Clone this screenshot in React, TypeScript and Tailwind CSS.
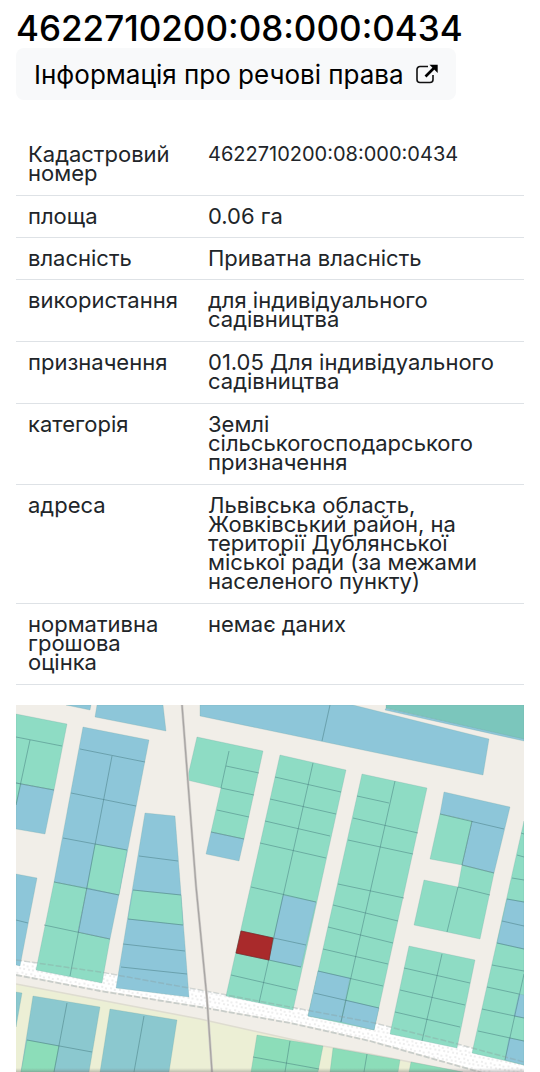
type Row = { label: string; value: string; wraps: boolean; numeric?: boolean };

const cadastralNumber = '4622710200:08:000:0434';

const rows: Row[] = [
  { label: 'Кадастровий номер', value: cadastralNumber, wraps: true, numeric: true },
  { label: 'площа', value: '0.06 га', wraps: false },
  { label: 'власність', value: 'Приватна власність', wraps: false },
  { label: 'використання', value: 'для індивідуального садівництва', wraps: true },
  { label: 'призначення', value: '01.05 Для індивідуального садівництва', wraps: true },
  { label: 'категорія', value: 'Землі сільськогосподарського призначення', wraps: true },
  {
    label: 'адреса',
    value: 'Львівська область, Жовківський район, на території Дублянської міської ради (за межами населеного пункту)',
    wraps: true,
  },
  { label: 'нормативна грошова оцінка', value: 'немає даних', wraps: true },
];

const GREEN = '#8edcc4';
const BLUE = '#8dc6d9';
const TEAL = '#7bc6bc';
const TEAL_BLUE = '#8bc8cf';
const MEADOW = '#8cddb9';

// Filled plots: [colour, polygon points]
const plots: [string, string][] = [
  [BLUE, '66,705 91,705 90,710'],
  [BLUE, '97,705 163,705 166,731 95,717'],
  [GREEN, '16,714 67,724 54,790 16,783'],
  [BLUE, '16,783 54,790 45,834 16,829'],
  [GREEN, '16,783 21,784 16,805'],
  [BLUE, '16,874 37,878 20,966 16,965'],
  [BLUE, '83,727 149,740 119,895 54,882'],
  [GREEN, '95,844 127,850 119,895 87,888'],
  [GREEN, '54,882 87,888 78,932 110,939 102,983 36,970'],
  [BLUE, '87,888 119,895 110,939 78,932'],
  [BLUE, '145,813 175,816 189,997 116,988'],
  [GREEN, '133,890 181,895 183,925 128,919'],
  [BLUE, '200,705 353,705 489,739 483,775 200,716'],
  [BLUE, '386,708 524,738 524,741 385,710'],
  [TEAL, '386,705 524,705 524,739 386,708'],
  [GREEN, '197,737 263,751 244,839 211,832 221,788 187,780'],
  [BLUE, '211,832 244,839 239,861 206,854'],
  [GREEN, '280,755 346,770 293,1010 226,996'],
  [BLUE, '283,895 316,902 301,967 269,960'],
  [GREEN, '362,774 427,788 374,1030 308,1016'],
  [BLUE, '318,971 350,978 341,1022 308,1016'],
  [BLUE, '346,1000 379,1008 374,1030 341,1022'],
  [BLUE, '444,792 510,807 494,873 462,865 472,821 440,814'],
  [GREEN, '440,814 472,821 462,865 430,859'],
  [GREEN, '462,865 494,873 480,939 414,925 424,880 458,887'],
  [GREEN, '409,946 475,960 457,1048 390,1034'],
  [GREEN, '524,821 524,1065 472,1053'],
  [BLUE, '507,899 524,902 524,949 497,943'],
  [BLUE, '519,994 524,995 524,1018 514,1016'],
  [BLUE, '509,1038 524,1041 524,1065 505,1060'],
  [TEAL_BLUE, '16,992 22,993 16,1027'],
  [TEAL_BLUE, '33,996 100,1007 89,1072 21,1072'],
  [MEADOW, '27,1040 59,1046 54,1072 21,1072'],
  [TEAL_BLUE, '110,1009 177,1020 169,1072 100,1072'],
  [MEADOW, '257,1035 323,1046 318,1072 251,1072'],
  [MEADOW, '333,1048 400,1060 398,1072 330,1072'],
  [MEADOW, '411,1062 463,1072 409,1072'],
];

// Boundaries between neighbouring plots
const boundaries =
  'M16 737L62 746M30 740L16 805M16 783L54 790M16 920L28 923' +
  'M112 756L70 976M80 749L145 762M71 793L136 806M63 838L127 850M54 882L119 895M44 925L110 939' +
  'M139 856L178 861M133 890L181 895M128 919L183 925M123 944L185 951M121 967L187 974' +
  'M330 705L322 741M229 751L221 788M226 766L259 773M221 788L254 795M217 810L249 817M211 832L244 839' +
  'M313 763L259 1003M275 777L341 792M270 799L336 814M265 821L330 836M260 843L326 858M251 887L316 902' +
  'M241 931L306 945M236 953L301 967M231 975L296 990' +
  'M395 781L341 1022M357 796L389 803M353 818L418 833M348 840L413 854M338 884L404 898M333 905L398 921' +
  'M328 927L393 943M323 949L388 964M318 971L383 986M314 993L379 1008' +
  'M440 814L504 829M472 821L462 865L494 873M458 887L447 932M458 887L490 895' +
  'M442 954L422 1041M404 968L470 983M400 990L465 1005M395 1012L460 1027' +
  'M521 833L524 834M517 855L524 857M512 878L524 880M507 899L524 902M502 921L524 926M497 943L524 949' +
  'M492 965L524 971M487 987L519 994M482 1009L524 1018M478 1031L524 1041M524 974L505 1060' +
  'M67 1003L54 1072M27 1040L92 1052M144 1016L134 1072M290 1041L285 1072M253 1057L319 1069M367 1054L364 1072';

function ParcelMap() {
  return (
    <svg viewBox="16 705 508 367" className="block w-full" role="img" aria-label="Кадастрова карта">
      <defs>
        <pattern id="gravel" width="9" height="8" patternUnits="userSpaceOnUse" patternTransform="rotate(10)">
          <rect width="9" height="8" fill="#ffffff" />
          <g fill="#d0d0d0">
            <circle cx="2" cy="2" r="0.7" />
            <circle cx="6" cy="3" r="0.7" />
            <circle cx="8" cy="6" r="0.7" />
            <circle cx="3" cy="6" r="0.7" />
          </g>
        </pattern>
        <linearGradient id="fade" x1="0" y1="0" x2="0" y2="1">
          <stop offset="0" stopColor="#777777" stopOpacity="0" />
          <stop offset="1" stopColor="#777777" stopOpacity="0.4" />
        </linearGradient>
      </defs>
      <rect x="16" y="705" width="508" height="367" fill="#f1eee8" />
      <path d="M16 984L100 1000L200 1019L317 1045L370 1054L460 1072H16Z" fill="#ecefd5" />
      <path d="M16 984L100 1000L200 1019L317 1045L370 1054L460 1072" fill="none" stroke="#dedcd0" strokeWidth="1.5" />
      <path d="M16 960L100 972L200 990L290 1007L370 1022L450 1042L524 1062V1072H483L370 1040L290 1022L200 1006L100 990L16 974Z" fill="url(#gravel)" />
      {plots.map(([fill, points]) => (
        <polygon key={points} points={points} fill={fill} stroke="#6f9f9c" strokeOpacity="0.45" strokeWidth="0.5" />
      ))}
      <path d={boundaries} fill="none" stroke="#3f7376" strokeOpacity="0.75" strokeWidth="0.6" />
      <polygon points="241,931 273,938 269,960 236,953" fill="#a92a2b" stroke="#842224" strokeWidth="0.7" />
      <g fill="none" stroke="#8d9a9b" strokeDasharray="6 2">
        <path d="M16 960L100 972L200 990L290 1007L370 1022L450 1042L524 1062" strokeOpacity="0.35" strokeWidth="1.5" />
        <path d="M16 975L100 991L200 1007L290 1023L370 1041L483 1073" strokeOpacity="0.4" strokeWidth="1.8" />
      </g>
      <path d="M182 705L196 886L207 999L212 1072" fill="none" stroke="#d0cdca" strokeWidth="2.6" />
      <path d="M182 705L196 886L207 999L212 1072" fill="none" stroke="#a8a5a3" strokeWidth="1.3" />
      <rect x="16" y="1068" width="508" height="4" fill="url(#fade)" />
    </svg>
  );
}

function ExternalLinkIcon() {
  return (
    <svg viewBox="0 0 22 20" className="h-5 w-[22px] shrink-0" fill="none" aria-hidden="true">
      <path d="M12 2.5H4A3 3 0 0 0 1 5.5V15.500A3 3 0 0 0 4 18.500H14A3 3 0 0 0 17 15.500V11" stroke="#111" strokeWidth="1.6" />
      <path d="M9.500 12.500L18 4" stroke="#000" strokeWidth="2.6" />
      <path d="M13.500 0.800H21.700V9Z" fill="#000" />
    </svg>
  );
}

export default function App() {
  return (
    <main className="bg-white px-4 pt-2 font-['Inter',sans-serif] text-[#212529]">
      <h1 className="text-[35px] leading-10 font-medium text-black">{cadastralNumber}</h1>
      <a
        href="#rights"
        className="flex h-[52px] w-fit items-center gap-3 rounded-lg bg-[#f8f9fa] px-[18px] text-[26px] whitespace-nowrap text-black"
      >
        Інформація про речові права
        <ExternalLinkIcon />
      </a>
      <table className="mt-[34px] w-full table-fixed border-separate border-spacing-0 text-left text-[22px] leading-[19px]">
        <colgroup>
          <col className="w-[180px]" />
          <col />
        </colgroup>
        <tbody>
          {rows.map(({ label, value, wraps, numeric }) => (
            <tr key={label} className={wraps ? '[&>*]:pb-3' : '[&>*]:pb-[11px]'}>
              <th scope="row" className="border-b border-[#dee2e6] px-3 pt-[11px] align-top font-normal">
                {label}
              </th>
              <td className={`border-b border-[#dee2e6] px-3 pt-[11px] align-top ${numeric ? 'text-xl leading-[19px]' : ''}`}>
                {value}
              </td>
            </tr>
          ))}
        </tbody>
      </table>
      <div className="mt-5">
        <ParcelMap />
      </div>
    </main>
  );
}
